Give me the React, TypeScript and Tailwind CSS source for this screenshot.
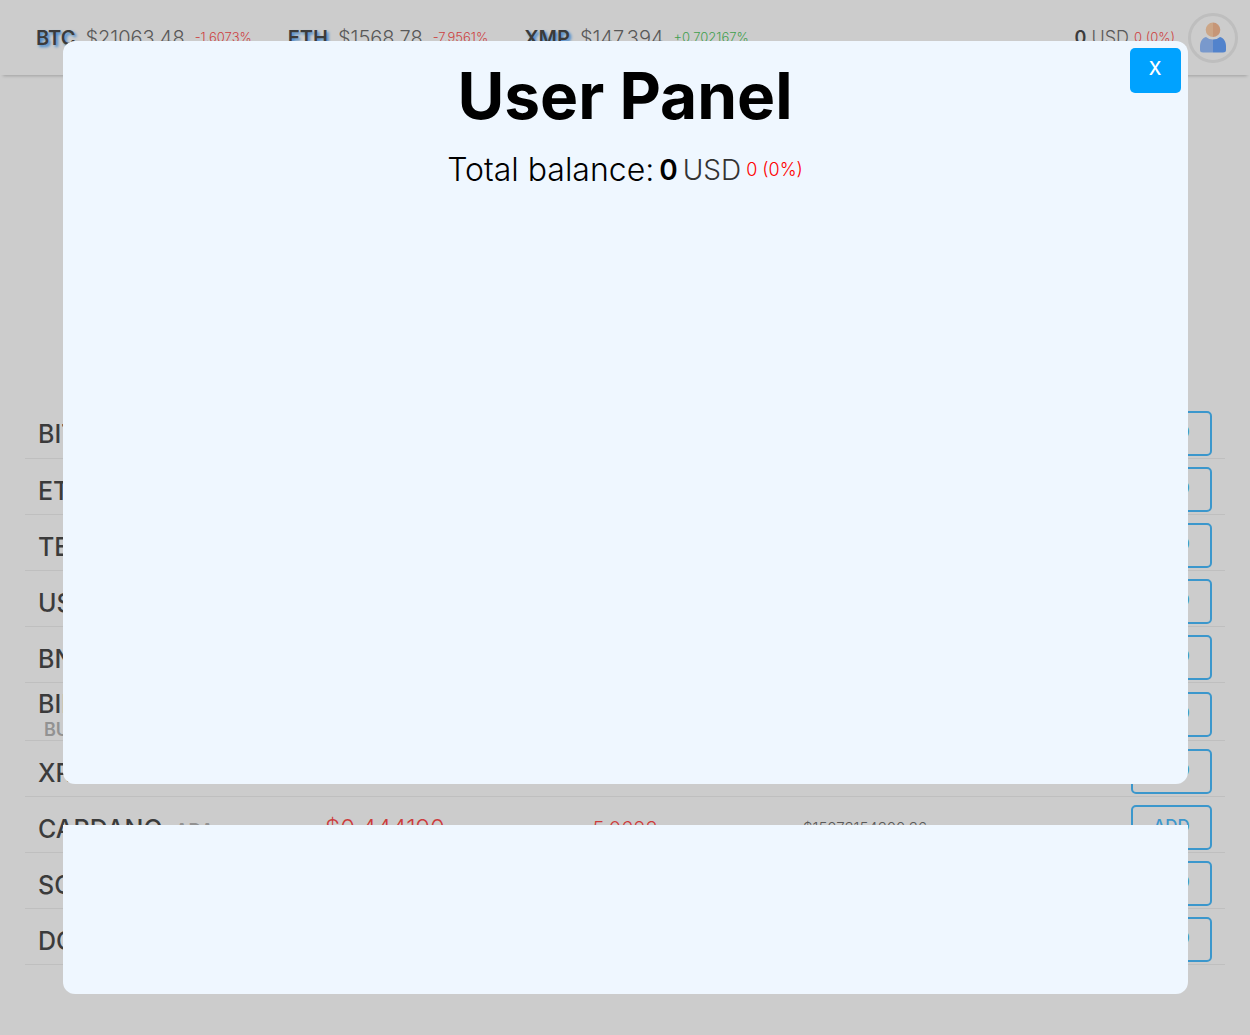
type Ticker = { symbol: string; price: string; change: string; up: boolean };

type Coin = {
  name: string;
  symbol: string;
  price?: string;
  change?: string;
  cap?: string;
};

const tickers: Ticker[] = [
  { symbol: "BTC", price: "$21063.48", change: "-1.6073%", up: false },
  { symbol: "ETH", price: "$1568.78", change: "-7.9561%", up: false },
  { symbol: "XMP", price: "$147.394", change: "+0.702167%", up: true },
];

const coins: Coin[] = [
  { name: "BITCOIN", symbol: "BTC" },
  { name: "ETHEREUM", symbol: "ETH" },
  { name: "TETHER", symbol: "USDT" },
  { name: "USD COIN", symbol: "USDC" },
  { name: "BNB", symbol: "BNB" },
  { name: "BINANCE USD", symbol: "BUSD" },
  { name: "XRP", symbol: "XRP" },
  {
    name: "CARDANO",
    symbol: "ADA",
    price: "$0.444190",
    change: "5.0623",
    cap: "$15073154300.36",
  },
  { name: "SOLANA", symbol: "SOL" },
  { name: "DOGECOIN", symbol: "DOGE" },
];

function UserIcon() {
  return (
    <svg viewBox="0 0 26 31" className="h-[31px] w-[26px]" aria-hidden="true">
      <path d="M6 15C2 16 0 20 0 24.500v3.500Q0 30.500 3 30.500H13V17.500Q9 17.500 6 15Z" fill="#6ea6ff" />
      <path d="M20 15c4 1 6 5 6 9.500v3.500q0 2.500-3 2.500H13V17.500q4 0 7-2.500Z" fill="#2a7fff" />
      <path d="M13 .5a7.300 7.300 0 0 0 0 14.600Z" fill="#ffbd86" />
      <path d="M13 .5a7.300 7.300 0 0 1 0 14.600Z" fill="#f5a06a" />
    </svg>
  );
}

function TopBar() {
  return (
    <header className="flex h-[75px] items-center justify-between pr-3 pl-9 shadow-[0_4px_3px_-3px_rgba(0,0,0,0.3)]">
      <ul className="flex items-center gap-9">
        {tickers.map((t) => (
          <li key={t.symbol} className="flex items-center gap-[10px]">
            <b className="text-xl font-semibold [text-shadow:2px_2px_3px_#0080ff]">
              {t.symbol}
            </b>
            <span className="text-xl font-light text-[#333]">{t.price}</span>
            <span
              className={
                t.up
                  ? "text-[13px] font-light text-[#00b020]"
                  : "text-[13px] font-light text-[#ff0000]"
              }
            >
              {t.change}
            </span>
          </li>
        ))}
      </ul>
      <div className="flex items-center gap-[5px]">
        <span className="text-lg font-semibold">0</span>
        <span className="text-lg font-light text-[#333]">USD</span>
        <span className="text-[13px] font-light text-[#ff0000]">0 (0%)</span>
        <button
          type="button"
          aria-label="User"
          className="ml-2 flex size-[50px] items-center justify-center rounded-full border-[3px] border-[#e6e6e6]"
        >
          <UserIcon />
        </button>
      </div>
    </header>
  );
}

function CoinTable() {
  return (
    <table className="w-full table-fixed border-collapse">
      <tbody>
        {coins.map((c) => (
          <tr key={c.symbol} className="h-14 border-b border-[#e9e9e9]">
            <td className="pt-[9px] pr-6 pl-[13px] text-[25px] leading-6 font-medium">
              {c.name}{" "}
              <small className="inline-block pl-1.5 align-middle text-lg leading-4 font-semibold text-[#999]">
                {c.symbol}
              </small>
            </td>
            <td className="pt-[9px] text-center text-2xl font-light text-[#ff0000]">
              {c.price}
            </td>
            <td className="pt-[9px] text-center text-xl font-light text-[#ff0000]">
              {c.change}
            </td>
            <td className="pt-[9px] text-center text-[15px] font-light text-[#333]">
              {c.cap}
            </td>
            <td className="pt-[7px] pr-[13px] text-right">
              <button
                type="button"
                className="ml-auto block h-[45px] w-[81px] rounded-[5px] border-2 border-[#00a2ff] pb-0.5 text-[17px] font-medium text-[#00a2ff]"
              >
                ADD
              </button>
            </td>
          </tr>
        ))}
      </tbody>
    </table>
  );
}

function UserPanel() {
  return (
    <div className="fixed inset-0 flex flex-col items-center gap-[41px] bg-[#888888]/43 py-[41px]">
      <section
        role="dialog"
        aria-labelledby="panel-title"
        className="relative w-[90%] flex-1 rounded-xl bg-[#eff7ff] pt-5 text-black"
      >
        <button
          type="button"
          aria-label="Close"
          className="absolute top-[7px] right-[7px] h-[45px] w-[51px] rounded-[5px] bg-[#00a2ff] pb-1 text-lg font-medium text-white"
        >
          X
        </button>
        <h1
          id="panel-title"
          className="text-center text-[64px] leading-[70px] font-bold"
        >
          User Panel
        </h1>
        <p className="mt-[21px] flex items-center justify-center gap-[5px] leading-9">
          <span className="text-[32px] font-light">Total balance:</span>
          <span className="text-[28px] font-semibold">0</span>
          <span className="text-[28px] font-light text-[#333]">USD</span>
          <span className="text-lg font-light text-[#ff0000]">0 (0%)</span>
        </p>
      </section>
      <section className="h-[169px] w-[90%] rounded-b-xl bg-[#eff7ff]" />
    </div>
  );
}

export default function App() {
  return (
    <div className="min-h-screen bg-white font-[Inter,sans-serif] text-black">
      <TopBar />
      <main className="px-[25px] pt-[327px] pb-[70px]">
        <CoinTable />
      </main>
      <UserPanel />
    </div>
  );
}
